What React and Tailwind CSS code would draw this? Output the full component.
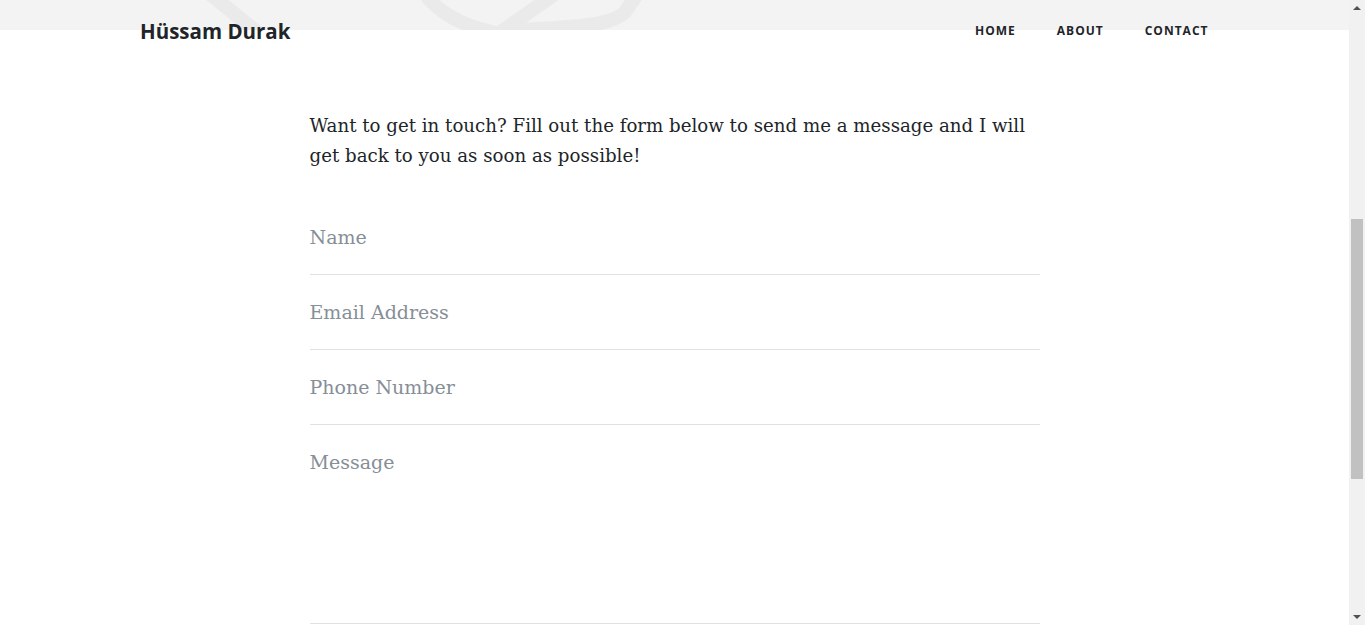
export default function App() {
  const serif = { fontFamily: '"DejaVu Serif", "Liberation Serif", serif' };
  const fields = ["Name", "Email Address", "Phone Number"];
  return (
    <div className="flex h-[625px] w-[1365px] overflow-hidden bg-white">
      <div className="relative flex flex-1 flex-col">
        <div className="h-[30px] overflow-hidden bg-[#f3f3f3]">
          <svg width="1349" height="30" viewBox="0 0 1349 30" fill="none">
            <g stroke="#eaeaea" strokeWidth="14" strokeLinecap="round">
              <path d="M205 -10 L262 36" />
              <path d="M428 -2 C445 18 470 28 500 34" />
              <path d="M498 34 L552 -4" />
              <path d="M505 31 C560 27 610 28 625 12 L636 -4" />
            </g>
          </svg>
        </div>

        <nav className="absolute left-0 right-0 top-0 flex h-[62px] items-center justify-between pl-[140px] pr-[120px] font-['Open_Sans',sans-serif] text-[#212529]">
          <span className="text-[20.5px] font-bold leading-none">Hüssam Durak</span>
          <ul className="flex items-center">
            {["HOME", "ABOUT", "CONTACT"].map((t) => (
              <li key={t} className="px-[20.5px] text-[12px] font-bold tracking-[1px] leading-none">
                {t}
              </li>
            ))}
          </ul>
        </nav>

        <main className="mx-auto w-[730px] pt-[81px]" style={serif}>
          <p className="text-[18.2px] leading-[30px] text-[#212529]">
            Want to get in touch? Fill out the form below to send me a message and I will get back to you as soon as possible!
          </p>
          <form className="mt-[29px]">
            {fields.map((f) => (
              <div key={f} className="flex h-[75px] items-center border-b border-[#dee2e6]">
                <span className="text-[19px] leading-[30px] text-[#868e96]">{f}</span>
              </div>
            ))}
            <div className="h-[199px] border-b border-[#dee2e6] pt-[22px]">
              <span className="text-[19px] leading-[30px] text-[#868e96]">Message</span>
            </div>
          </form>
        </main>
      </div>

      <div className="flex w-[16px] flex-col bg-[#f1f1f1]">
        <div className="flex h-[16px] items-center justify-center">
          <div className="h-0 w-0 border-x-[4px] border-b-[4px] border-x-transparent border-b-[#505050]" />
        </div>
        <div className="h-[203px]" />
        <div className="mx-auto h-[260px] w-[12px] bg-[#c1c1c1]" />
        <div className="flex-1" />
        <div className="flex h-[16px] items-center justify-center">
          <div className="h-0 w-0 border-x-[4px] border-t-[4px] border-x-transparent border-t-[#505050]" />
        </div>
      </div>
    </div>
  );
}
